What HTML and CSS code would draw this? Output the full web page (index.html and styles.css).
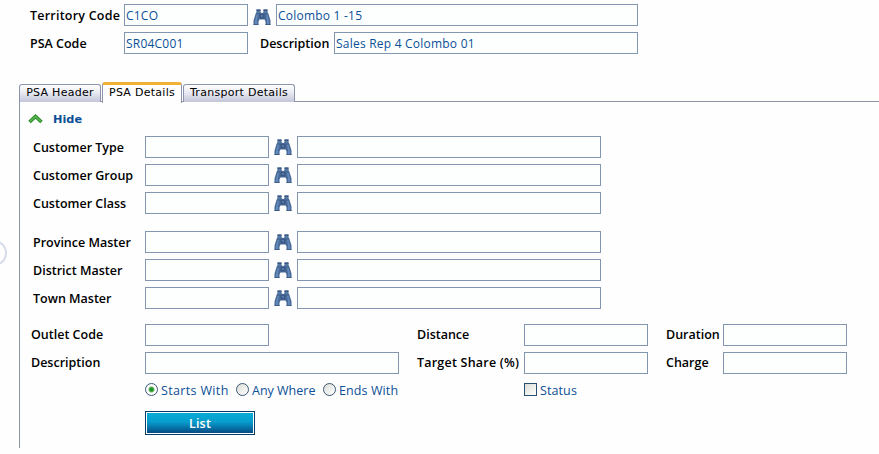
FILE: index.html
```
<!DOCTYPE html>
<html lang="en">
<head>
<meta charset="utf-8">
<title>PSA Details</title>
<link rel="stylesheet" href="styles.css">
</head>
<body>
<svg width="0" height="0" class="defs" aria-hidden="true">
  <defs>
    <symbol id="binoculars" viewBox="0 0 18 17">
      <path d="M3.500 .5h4v2.500l1 1h1l1-1V.5h4v2.500l1 2 2 6.500v4.500h-5v-3.500L11.500 10.500h-5L5.500 12.500V16H.5v-4.500l2-6.500 1-2z" fill="#496b99"/>
      <path d="M3.500 .5h4v1.500h-4zM10.500 .5h4v1.500h-4zM6.500 5h5v4.500h-5z" fill="#3c5986"/>
      <path d="M3.500 6l1.500 0-1 5.500v3.500H2V12zM13 6h1.500l1.500 6v3h-2v-3.500z" fill="#6488b9"/>
      <path d="M8 6h2v2H8z" fill="#5778a7"/>
      <path d="M4.500 3h2M11.500 3h2" stroke="#718fb9"/>
      <path d="M.5 15.500h5M12.500 15.500h5" stroke="#405e8a"/>
    </symbol>
  </defs>
</svg>
<main class="page">
  <section class="summary">
    <div class="row territory">
      <label class="spaced">Territory Code</label><span class="field">C1CO</span>
      <svg class="lookup"><use href="#binoculars"/></svg><span class="field">Colombo 1 -15</span>
    </div>
    <div class="row psa">
      <label>PSA Code</label><span class="field">SR04C001</span>
      <label class="mid">Description</label><span class="field">Sales Rep 4 Colombo 01</span>
    </div>
  </section>
  <nav class="tabs">
    <a class="tab header">PSA Header</a><a class="tab active">PSA Details</a><a class="tab transport">Transport Details</a>
  </nav>
  <section class="panel">
    <div class="toggle"><svg width="16" height="12" viewBox="0 0 16 12"><path d="M1.500 9L7.500 3.500L13.500 9" fill="none" stroke="#2d8b32" stroke-width="3.600"/><path d="M2 8.500L7.500 3.500L13 8.500" fill="none" stroke="#5bb947" stroke-width="1.500"/></svg><b>Hide</b></div>
    <div class="group">
      <div class="row search"><label>Customer Type</label><span class="field"></span><svg class="lookup"><use href="#binoculars"/></svg><span class="field"></span></div>
      <div class="row search"><label>Customer Group</label><span class="field"></span><svg class="lookup"><use href="#binoculars"/></svg><span class="field"></span></div>
      <div class="row search"><label>Customer Class</label><span class="field"></span><svg class="lookup"><use href="#binoculars"/></svg><span class="field"></span></div>
    </div>
    <div class="group masters">
      <div class="row search"><label>Province Master</label><span class="field"></span><svg class="lookup"><use href="#binoculars"/></svg><span class="field"></span></div>
      <div class="row search"><label>District Master</label><span class="field"></span><svg class="lookup"><use href="#binoculars"/></svg><span class="field"></span></div>
      <div class="row search"><label>Town Master</label><span class="field"></span><svg class="lookup"><use href="#binoculars"/></svg><span class="field"></span></div>
    </div>
    <div class="group details">
      <div class="row outlet"><label>Outlet Code</label><span class="field short"></span><label>Distance</label><span class="field"></span><label>Duration</label><span class="field"></span></div>
      <div class="row outlet"><label>Description</label><span class="field"></span><label class="spaced">Target Share (%)</label><span class="field"></span><label>Charge</label><span class="field"></span></div>
    </div>
    <div class="options">
      <span class="option starts"><i class="radio on"></i>Starts With</span>
      <span class="option any"><i class="radio"></i>Any Where</span>
      <span class="option ends"><i class="radio"></i>Ends With</span>
      <span class="option"><i class="check"></i>Status</span>
    </div>
    <button class="list">List</button>
  </section>
  <span class="handle"></span>
</main>
</body>
</html>
```
FILE: styles.css
```
* { box-sizing: border-box; }
body { margin: 0; background: #fefefe; color: #000; font: 13px/22px "Open Sans", sans-serif; }
.defs { position: absolute; }
.page { position: relative; height: 454px; overflow: hidden; }
.summary { padding: 4px 0 0 30px; display: grid; gap: 6px; }
.row { display: grid; height: 22px; align-items: center; }
label { font-weight: 600; font-size: 12.5px; line-height: 20px; padding-top: 2px; letter-spacing: 0; white-space: nowrap; }
.spaced { letter-spacing: .22px; }
.field { height: 22px; border: 1px solid #8296b0; background: #fdffff; color: #0b4f96; padding: 0 1px; line-height: 21px; font-size: 12px; letter-spacing: .22px; white-space: nowrap; }
.territory { grid-template-columns: 94px 124px 28px 362px; }
.psa { grid-template-columns: 94px 124px 86px 304px; }
.mid { padding-left: 12px; }
.lookup { width: 18px; height: 17px; margin-left: 5px; margin-top: 4px; }
.tabs { display: flex; align-items: flex-end; height: 21px; margin: 27px 0 0 19px; gap: 1px; }
.tab { height: 18px; border: 1px solid #8d95ae; border-bottom: 0; border-radius: 3px 3px 0 0; background: linear-gradient(#fff, #ecedf4 40%, #c3c5da); font: 11px/16px "DejaVu Sans", sans-serif; letter-spacing: .28px; text-align: center; white-space: nowrap; }
.header { width: 82px; }
.active { position: relative; width: 80px; height: 21px; border-top: 3px solid #efb234; background: #fefefe; z-index: 1; margin-bottom: -1px; }
.transport { width: 112px; }
.panel { height: 347px; margin-left: 19px; border-top: 1px solid #8d95a5; border-left: 1px solid #8d95a5; margin-top: -1px; }
.toggle { display: flex; align-items: center; height: 34px; padding-left: 8px; gap: 9px; color: #0b4f96; font: bold 11.3px/16px "DejaVu Sans", sans-serif; }
.toggle b { padding-top: 1px; }
.group { display: grid; gap: 6px; padding-left: 13px; }
.masters { margin-top: 17px; }
.details { margin-top: 15px; padding-left: 11px; }
.search { grid-template-columns: 112px 124px 28px 304px; }
.search .lookup { margin-top: 1px; }
.outlet { grid-template-columns: 114px 254px 125px 142px 57px 124px; }
.outlet label { padding-top: 0; }
.outlet label:nth-of-type(2) { padding-left: 18px; }
.outlet .field:nth-of-type(2) { width: 124px; }
.short { width: 124px; }
.options { display: flex; height: 22px; margin-top: 5px; padding-left: 125px; color: #0b4f96; }
.option { display: flex; align-items: center; white-space: nowrap; font-size: 12.5px; line-height: 20px; padding-top: 1px; letter-spacing: .1px; }
.starts { width: 91px; letter-spacing: .35px; }
.any { width: 87px; letter-spacing: 0; }
.ends { width: 201px; }
.radio { width: 13px; height: 13px; margin: -2px 3px 0 0; border: 1px solid #3b5877; border-radius: 50%; background: linear-gradient(135deg, #dcdcd7, #fff); flex: none; }
.on { background: radial-gradient(circle, #229329 0 1.500px, #65ba60 2.500px, #fff 3.500px); }
.check { width: 13px; height: 13px; margin: -2px 3px 0 0; border: 1px solid #294f73; background: linear-gradient(135deg, #dcdcd7, #fff); }
.list { display: block; width: 110px; height: 24px; margin: 10px 0 0 125px; padding: 1px 0 0; border: 1px solid #073d6b; outline: 1px solid #fff; outline-offset: -2px; background: linear-gradient(#07add7, #079dcc 45%, #05447e); color: #fff; font: 600 12.5px/21px "Open Sans", sans-serif; letter-spacing: .2px; }
.handle { position: absolute; left: -19px; top: 240px; width: 26px; height: 26px; border: 2px solid #d5dbe9; border-radius: 50%; }
```
